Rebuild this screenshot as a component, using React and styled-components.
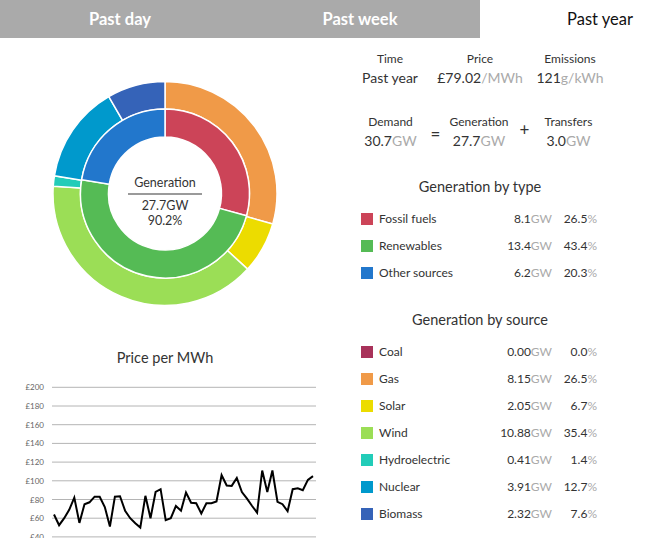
import React from "react";
import styled, { createGlobalStyle } from "styled-components";

const GlobalStyle = createGlobalStyle`
  html, body { margin: 0; padding: 0; background: #fff; overflow: hidden; }
  body { font-family: Lato, "Open Sans", sans-serif; color: #333; }
`;

const Page = styled.div`
  width: 720px;
`;

const Tabs = styled.div`
  display: flex;
  height: 38px;
`;

const Tab = styled.div`
  width: 240px;
  display: flex;
  align-items: center;
  justify-content: center;
  font-size: 16.5px;
  padding-bottom: 1px;
  font-weight: ${(p) => (p.$active ? 400 : 700)};
  background: ${(p) => (p.$active ? "#fff" : "#aaaaaa")};
  color: ${(p) => (p.$active ? "#111" : "#fff")};
`;

const Main = styled.div`
  display: grid;
  grid-template-columns: 330px 300px;
`;

const LeftCol = styled.div`
  display: flex;
  flex-direction: column;
`;

const DonutBox = styled.div`
  position: relative;
  height: 300px;
`;

const CenterLabel = styled.div`
  position: absolute;
  left: 165px;
  top: 136.5px;
  transform: translateX(-50%);
  display: flex;
  flex-direction: column;
  align-items: center;
  font-size: 12.5px;
  line-height: 15px;
  color: #333;
`;

const CenterRule = styled.div`
  width: 74px;
  height: 2px;
  background: #9a9a9a;
  margin: 3px 0 3px;
`;

const ChartTitle = styled.div`
  margin-top: 10px;
  text-align: center;
  font-size: 14.5px;
  line-height: 20px;
  color: #333;
`;

const RightCol = styled.div`
  display: flex;
  flex-direction: column;
  padding-top: 13px;
`;

const StatsRow = styled.div`
  display: flex;
  justify-content: center;
  align-items: center;
  margin-top: ${(p) => p.$gap || 0}px;
`;

const Stat = styled.div`
  width: ${(p) => p.$w}px;
  display: flex;
  flex-direction: column;
  align-items: center;
`;

const StatLabel = styled.div`
  font-size: 12px;
  line-height: 16px;
  color: #333;
`;

const StatValue = styled.div`
  font-size: 14px;
  line-height: 21px;
  color: #333;
  white-space: nowrap;
`;

const Unit = styled.span`
  color: #aaa;
`;

const Operator = styled.div`
  width: 8px;
  text-align: center;
  font-size: 17px;
  color: #333;
  margin-top: ${(p) => p.$dy || 0}px;
`;

const SectionTitle = styled.div`
  text-align: center;
  font-size: 14.5px;
  line-height: 22px;
  color: #333;
  margin-top: ${(p) => p.$gap}px;
  margin-bottom: 7px;
`;

const Row = styled.div`
  display: flex;
  align-items: center;
  height: 27px;
  width: 236px;
  margin-left: 31px;
  font-size: 12px;
  color: #333;
`;

const Swatch = styled.div`
  width: 12px;
  height: 12px;
  background: ${(p) => p.$c};
  margin-right: 6px;
`;

const RowLabel = styled.div`
  flex: 1;
`;

const RowValue = styled.div`
  text-align: right;
  white-space: nowrap;
`;

const RowPct = styled.div`
  width: 45px;
  text-align: right;
  white-space: nowrap;
`;

const C = {
  coal: "#a8325a",
  gas: "#f09a48",
  solar: "#ecdc00",
  wind: "#9bde56",
  hydro: "#22ccb8",
  nuclear: "#0099cc",
  biomass: "#3563b8",
  fossil: "#cc4458",
  renew: "#55bb55",
  other: "#2277cc",
};

const byType = [
  { name: "Fossil fuels", c: C.fossil, v: "8.1", p: "26.5" },
  { name: "Renewables", c: C.renew, v: "13.4", p: "43.4" },
  { name: "Other sources", c: C.other, v: "6.2", p: "20.3" },
];

const bySource = [
  { name: "Coal", c: C.coal, v: "0.00", p: "0.0" },
  { name: "Gas", c: C.gas, v: "8.15", p: "26.5" },
  { name: "Solar", c: C.solar, v: "2.05", p: "6.7" },
  { name: "Wind", c: C.wind, v: "10.88", p: "35.4" },
  { name: "Hydroelectric", c: C.hydro, v: "0.41", p: "1.4" },
  { name: "Nuclear", c: C.nuclear, v: "3.91", p: "12.7" },
  { name: "Biomass", c: C.biomass, v: "2.32", p: "7.6" },
];

const CX = 165;
const CY = 155.5;

function pt(r, deg) {
  const a = ((deg - 90) * Math.PI) / 180;
  return [CX + r * Math.cos(a), CY + r * Math.sin(a)];
}

function arcPath(a0, a1, ro, ri) {
  const large = a1 - a0 > 180 ? 1 : 0;
  const [x0, y0] = pt(ro, a0);
  const [x1, y1] = pt(ro, a1);
  const [x2, y2] = pt(ri, a1);
  const [x3, y3] = pt(ri, a0);
  return `M${x0} ${y0}A${ro} ${ro} 0 ${large} 1 ${x1} ${y1}L${x2} ${y2}A${ri} ${ri} 0 ${large} 0 ${x3} ${y3}Z`;
}

function rings(items, ro, ri) {
  const total = items.reduce((s, d) => s + d.w, 0);
  let a = 0;
  return items
    .filter((d) => d.w > 0)
    .map((d, i) => {
      const a0 = a;
      a += (d.w / total) * 360;
      return <path key={i} d={arcPath(a0, a, ro, ri)} fill={d.c} stroke="#fff" strokeWidth="1.5" />;
    });
}

const inner = [
  { c: C.fossil, w: 8.1 },
  { c: C.renew, w: 13.4 },
  { c: C.other, w: 6.2 },
];

const outer = [
  { c: C.coal, w: 0 },
  { c: C.gas, w: 8.15 },
  { c: C.solar, w: 2.05 },
  { c: C.wind, w: 10.88 },
  { c: C.hydro, w: 0.41 },
  { c: C.nuclear, w: 3.91 },
  { c: C.biomass, w: 2.32 },
];

function Donut() {
  return (
    <DonutBox>
      <svg width="330" height="300">
        {rings(outer, 112, 84.5)}
        {rings(inner, 84.5, 56.5)}
      </svg>
      <CenterLabel>
        <div>Generation</div>
        <CenterRule />
        <div>27.7GW</div>
        <div>90.2%</div>
      </CenterLabel>
    </DonutBox>
  );
}

const prices = [
  64, 52.5, 60, 69, 82, 55, 75, 77, 83, 83, 72, 51, 83, 83.5, 68, 60, 54.5, 50,
  84, 60, 88, 91, 58, 60, 73, 68, 87.5, 76.5, 76, 65, 76, 76, 78, 106, 95, 94.5,
  103, 88, 81, 73, 66, 111, 88, 111, 77.5, 75, 67.5, 91, 92, 90, 101, 105,
];

function PriceChart() {
  const top = 19.3;
  const step = 0.935;
  const yOf = (v) => top + (200 - v) * step;
  const ticks = [200, 180, 160, 140, 120, 100, 80, 60, 40];
  const x0 = 54;
  const x1 = 313;
  const dx = (x1 - x0) / (prices.length - 1);
  const line = prices.map((v, i) => `${(x0 + i * dx).toFixed(1)},${yOf(v).toFixed(1)}`).join(" ");
  return (
    <svg width="330" height="180">
      {ticks.map((t) => (
        <g key={t}>
          <line x1="52" x2="316" y1={yOf(t)} y2={yOf(t)} stroke="#b4b4b4" strokeWidth="1" />
          <text
            x="44"
            y={yOf(t) + 3}
            textAnchor="end"
            fontSize="8"
            fill="#666"
            fontFamily="Lato, sans-serif"
          >
            £{t}
          </text>
        </g>
      ))}
      <polyline points={line} fill="none" stroke="#000" strokeWidth="2" strokeLinejoin="miter" />
    </svg>
  );
}

function LegendRows({ rows }) {
  return rows.map((r) => (
    <Row key={r.name}>
      <Swatch $c={r.c} />
      <RowLabel>{r.name}</RowLabel>
      <RowValue>
        {r.v}
        <Unit>GW</Unit>
      </RowValue>
      <RowPct>
        {r.p}
        <Unit>%</Unit>
      </RowPct>
    </Row>
  ));
}

export default function App() {
  return (
    <Page>
      <GlobalStyle />
      <Tabs>
        <Tab>Past day</Tab>
        <Tab>Past week</Tab>
        <Tab $active>Past year</Tab>
      </Tabs>
      <Main>
        <LeftCol>
          <Donut />
          <ChartTitle>Price per MWh</ChartTitle>
          <PriceChart />
        </LeftCol>
        <RightCol>
          <StatsRow>
            <Stat $w={90}>
              <StatLabel>Time</StatLabel>
              <StatValue>Past year</StatValue>
            </Stat>
            <Stat $w={90}>
              <StatLabel>Price</StatLabel>
              <StatValue>
                £79.02<Unit>/MWh</Unit>
              </StatValue>
            </Stat>
            <Stat $w={90}>
              <StatLabel>Emissions</StatLabel>
              <StatValue>
                121<Unit>g/kWh</Unit>
              </StatValue>
            </Stat>
          </StatsRow>
          <StatsRow $gap={26}>
            <Stat $w={80}>
              <StatLabel>Demand</StatLabel>
              <StatValue>
                30.7<Unit>GW</Unit>
              </StatValue>
            </Stat>
            <Operator $dy={2}>=</Operator>
            <Stat $w={81}>
              <StatLabel>Generation</StatLabel>
              <StatValue>
                27.7<Unit>GW</Unit>
              </StatValue>
            </Stat>
            <Operator $dy={-6}>+</Operator>
            <Stat $w={82}>
              <StatLabel>Transfers</StatLabel>
              <StatValue>
                3.0<Unit>GW</Unit>
              </StatValue>
            </Stat>
          </StatsRow>
          <SectionTitle $gap={25}>Generation by type</SectionTitle>
          <LegendRows rows={byType} />
          <SectionTitle $gap={23}>Generation by source</SectionTitle>
          <LegendRows rows={bySource} />
        </RightCol>
      </Main>
    </Page>
  );
}
